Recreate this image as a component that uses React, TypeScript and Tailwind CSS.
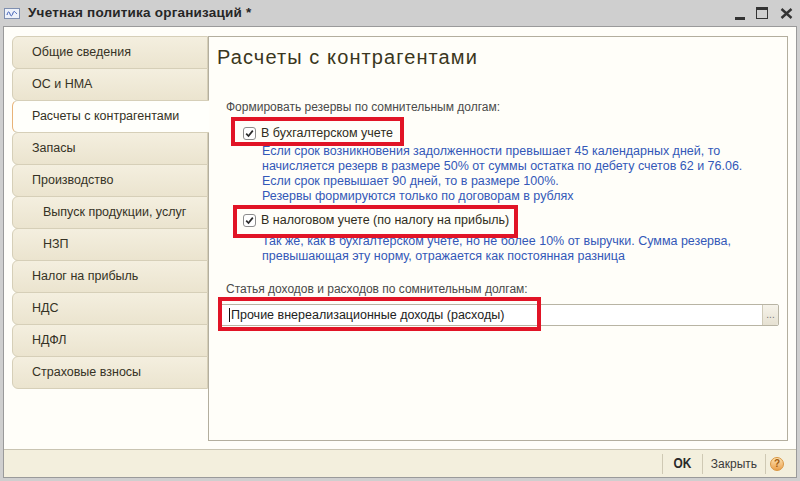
const tabs = [
  { label: 'Общие сведения' },
  { label: 'ОС и НМА' },
  { label: 'Расчеты с контрагентами', active: true },
  { label: 'Запасы' },
  { label: 'Производство' },
  { label: 'Выпуск продукции, услуг', sub: true },
  { label: 'НЗП', sub: true },
  { label: 'Налог на прибыль' },
  { label: 'НДС' },
  { label: 'НДФЛ' },
  { label: 'Страховые взносы' },
];

function Check() {
  return (
    <span className="w-[13px] h-[13px] rounded-[3px] border border-[#8c8c8c] bg-white flex items-center justify-center shrink-0">
      <svg width="9" height="9" viewBox="0 0 9 9">
        <path d="M1.2 4.6 L3.5 7 L7.8 1.6" fill="none" stroke="#2b2b2b" strokeWidth="1.7" />
      </svg>
    </span>
  );
}

export default function App() {
  return (
    <div
      className="w-[800px] h-[481px] bg-[#cfcfcf] flex flex-col overflow-hidden"
      style={{ fontFamily: '"Liberation Sans", Arial, sans-serif' }}
    >
      {/* Title bar */}
      <div className="h-[26px] flex items-center shrink-0">
        <div className="ml-[4px] w-[16px] h-[11px] border border-[#7f8fb0] bg-[#eef2fa] flex items-center justify-center">
          <svg width="12" height="7" viewBox="0 0 12 7">
            <path d="M1 5 C2 1, 3 1, 4 4 S6 6, 7 3 S9 2, 11 4" fill="none" stroke="#3b5bb5" strokeWidth="1" />
          </svg>
        </div>
        <span className="ml-[8px] text-[13.5px] font-bold text-[#262626] tracking-[0.2px]">Учетная политика организаций *</span>
        <div className="ml-auto flex items-center mr-[7px]">
          <div className="w-[10px] h-[3px] bg-[#333] mt-[11px]" />
          <div className="ml-[11px] w-[12px] h-[12px] border-[1.5px] border-t-[3px] border-[#333]" />
          <svg className="ml-[12px]" width="13" height="11" viewBox="0 0 13 11">
            <path d="M1.5 1 L11.5 10 M11.5 1 L1.5 10" stroke="#333" strokeWidth="2.4" />
          </svg>
        </div>
      </div>

      {/* Window body */}
      <div className="flex-1 mx-[3px] mb-[3px] border border-[#9a9a9a] bg-[#fffef9] flex flex-col">
        <div className="flex-1 flex pt-[9px] pr-[8px] pb-[8px]">
          {/* Left tabs */}
          <div className="w-[204px] pl-[8px] flex flex-col shrink-0">
            {tabs.map((t) => (
              <div
                key={t.label}
                className={
                  t.active
                    ? 'relative z-10 -mr-px h-[33px] -mt-px first:mt-0 flex items-center rounded-l-[6px] border border-r-0 border-[#d6cfb8] border-l-[#e8b378] bg-[#fffffb]'
                    : 'h-[33px] -mt-px first:mt-0 flex items-center rounded-l-[6px] border border-[#d6cfb8] bg-gradient-to-b from-[#f4efdf] to-[#ebe4cf]'
                }
              >
                <span className={`text-[12.5px] text-[#353225] ${t.sub ? 'pl-[30px]' : 'pl-[19px]'}`}>{t.label}</span>
              </div>
            ))}
          </div>

          {/* Content panel */}
          <div className="relative flex-1 border border-[#b3ae9e] bg-[#fffef9] flex flex-col pt-[8px]">
            <div className="ml-[8px] h-[24px] leading-[24px] text-[20px] tracking-[1.1px] text-[#3a3620]">Расчеты с контрагентами</div>

            <div className="ml-[17px] mt-[31px] text-[12px] leading-[15px] text-[#4a4a4a]">Формировать резервы по сомнительным долгам:</div>

            <div className="ml-[34px] mt-[10px] h-[16px] flex items-center gap-[5px]">
              <Check />
              <span className="text-[12.5px] text-[#2f2c20]">В бухгалтерском учете</span>
            </div>

            <div className="ml-[53px] mt-[3px] text-[12.5px] leading-[15px] text-[#3358b8]">
              <div>Если срок возникновения задолженности превышает 45 календарных дней, то</div>
              <div>начисляется резерв в размере 50% от суммы остатка по дебету счетов 62 и 76.06.</div>
              <div>Если срок превышает 90 дней, то в размере 100%.</div>
              <div>Резервы формируются только по договорам в рублях</div>
            </div>

            <div className="ml-[34px] mt-[8px] h-[16px] flex items-center gap-[5px]">
              <Check />
              <span className="text-[12.5px] text-[#2f2c20]">В налоговом учете (по налогу на прибыль)</span>
            </div>

            <div className="ml-[53px] mt-[6px] text-[12.5px] leading-[15px] text-[#3358b8]">
              <div>Так же, как в бухгалтерском учете, но не более 10% от выручки. Сумма резерва,</div>
              <div>превышающая эту норму, отражается как постоянная разница</div>
            </div>

            <div className="ml-[17px] mt-[18px] text-[12px] leading-[15px] text-[#4a4a4a]">Статья доходов и расходов по сомнительным долгам:</div>

            <div className="ml-[11px] mr-[8px] mt-[7px] h-[22px] flex border border-[#b8b4a4] rounded-[2px] bg-white">
              <div className="flex-1 flex items-center pl-[8px] text-[12.5px] text-[#222]">
                <span className="w-px h-[14px] bg-[#111] mr-[1px]" />
                Прочие внереализационные доходы (расходы)
              </div>
              <div className="w-[16px] border-l border-[#cfcab8] bg-gradient-to-b from-[#f6f3ea] to-[#e6e1d2] rounded-r-[2px] flex items-end justify-center pb-[5px] text-[10px] leading-none text-[#777]">
                ...
              </div>
            </div>

            {/* Red annotation frames */}
            <div className="absolute left-[22px] top-[80px] w-[173px] h-[29px] border-[4px] border-[#e11426]" />
            <div className="absolute left-[24px] top-[168px] w-[285px] h-[33px] border-[4px] border-[#e11426]" />
            <div className="absolute left-[9px] top-[260px] w-[323px] h-[34px] border-[4px] border-[#e11426]" />
          </div>
        </div>

        {/* Footer */}
        <div className="h-[28px] shrink-0 border-t border-[#c9c4b2] bg-[#f3efdd] flex items-center justify-end pr-[12px]">
          <div className="w-px h-[20px] bg-[#cfc9b4]" />
          <span className="px-[9px] text-[14px] font-bold text-[#2a2a2a] scale-x-[0.85]">OK</span>
          <div className="w-px h-[20px] bg-[#cfc9b4]" />
          <span className="px-[8px] text-[12px] text-[#3a3a3a]">Закрыть</span>
          <div className="w-px h-[20px] bg-[#cfc9b4]" />
          <div className="ml-[4px] w-[14px] h-[14px] rounded-full bg-gradient-to-b from-[#fde2b0] to-[#eaa04a] border border-[#d99540] flex items-center justify-center text-[10px] font-bold text-[#a15c10] leading-none">?</div>
        </div>
      </div>
    </div>
  );
}
